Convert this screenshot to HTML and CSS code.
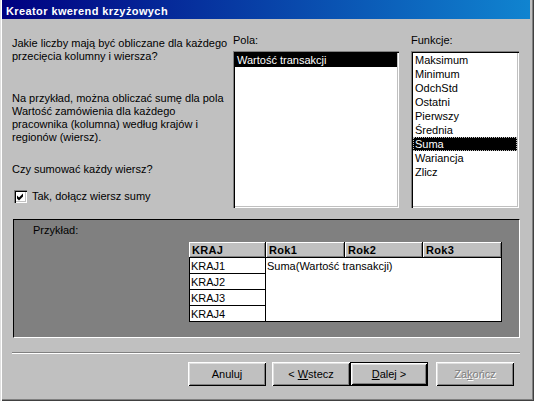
FILE: index.html
```html
<!DOCTYPE html>
<html lang="pl">
<head>
<meta charset="utf-8">
<title>Kreator kwerend krzyżowych</title>
<link rel="stylesheet" href="styles.css">
</head>
<body>
<div class="window">
  <div class="titlebar">Kreator kwerend krzyżowych</div>
  <div class="body">
    <div class="top">
      <div class="intro">
        <p class="q">Jakie liczby mają być obliczane dla każdego<br>przecięcia kolumny i wiersza?</p>
        <p class="example">Na przykład, można obliczać sumę dla pola<br>Wartość zamówienia dla każdego<br>pracownika (kolumna) według krajów i<br>regionów (wiersz).</p>
        <p class="q2">Czy sumować każdy wiersz?</p>
        <div class="check">
          <span class="box"><svg width="9" height="9" viewBox="0 0 9 9"><path d="M1 3.5 L3 5.5 L7 1.5 L7 4.5 L3 8.5 L1 6.5 Z" fill="#000"/></svg></span>
          <span>Tak, dołącz wiersz sumy</span>
        </div>
      </div>
      <div class="field fields">
        <div class="flabel">Pola:</div>
        <ul class="listbox">
          <li class="sel">Wartość transakcji</li>
        </ul>
      </div>
      <div class="field funcs">
        <div class="flabel">Funkcje:</div>
        <ul class="listbox">
          <li>Maksimum</li>
          <li>Minimum</li>
          <li>OdchStd</li>
          <li>Ostatni</li>
          <li>Pierwszy</li>
          <li>Średnia</li>
          <li class="sel focus">Suma</li>
          <li>Wariancja</li>
          <li>Zlicz</li>
        </ul>
      </div>
    </div>
    <div class="preview">
      <div class="plabel">Przykład:</div>
      <div class="grid">
        <div class="hcell">KRAJ</div>
        <div class="hcell">Rok1</div>
        <div class="hcell">Rok2</div>
        <div class="hcell">Rok3</div>
        <div class="rcell r1">KRAJ1</div>
        <div class="rcell r2">KRAJ2</div>
        <div class="rcell r3">KRAJ3</div>
        <div class="rcell r4">KRAJ4</div>
        <div class="vcell">Suma(Wartość transakcji)</div>
      </div>
    </div>
    <div class="sep"></div>
    <div class="buttons">
      <button class="btn cancel">Anuluj</button>
      <button class="btn back">&lt; <span class="acc">W</span>stecz</button>
      <button class="btn next default"><span class="acc">D</span>alej &gt;</button>
      <button class="btn finish disabled">Za<span class="acc">k</span>ończ</button>
    </div>
  </div>
</div>
</body>
</html>
```
FILE: styles.css
```css
* {
  box-sizing: border-box;
  margin: 0;
  padding: 0;
}

html, body {
  background: #c0c0c0;
}

body {
  font: 11px/13px "Liberation Sans", Arial, sans-serif;
  color: #000;
}

.window {
  width: 534px;
  height: 401px;
  overflow: hidden;
  background: #c0c0c0;
  padding: 0 4px 0 2px;
  box-shadow: inset 1px 0 0 #dfdfdf, inset 2px 0 0 #fff,
              inset -1px -1px 0 #404040, inset -2px -2px 0 #808080;
}

.titlebar {
  height: 19px;
  padding: 3px 0 0 4px;
  line-height: 16px;
  color: #fff;
  font-weight: bold;
  letter-spacing: 0.4px;
  background: linear-gradient(to right, #000080, #1084d0);
}

.body {
  padding: 15px 0 0 10px;
}

.top {
  display: flex;
  height: 174px;
}

.intro {
  width: 221px;
  padding-top: 3px;
}

.example {
  margin-top: 29px;
}

.q2 {
  margin-top: 19px;
}

.check {
  display: flex;
  margin-top: 14px;
}

.box {
  width: 13px;
  height: 13px;
  margin: 0 5px 0 2px;
  padding: 2px;
  background: #fff;
  box-shadow: inset 1px 1px 0 #808080, inset 2px 2px 0 #000,
              inset -1px -1px 0 #fff, inset -2px -2px 0 #c0c0c0;
}

.box svg {
  display: block;
}

.fields {
  width: 166px;
}

.funcs {
  width: 108px;
  margin-left: 12px;
}

.flabel {
  height: 13px;
}

.listbox {
  list-style: none;
  margin-top: 4px;
  height: 157px;
  padding: 2px;
  background: #fff;
  box-shadow: inset 1px 1px 0 #808080, inset 2px 2px 0 #000,
              inset -1px -1px 0 #fff, inset -2px -2px 0 #c0c0c0;
}

.listbox li {
  height: 14px;
  line-height: 14px;
  padding-left: 2px;
  white-space: nowrap;
}

.listbox li.sel {
  background: #000;
  color: #fff;
}

.listbox li.focus {
  outline: 1px dotted #bfbfbf;
  outline-offset: -1px;
}

.preview {
  margin: 11px 0 0 1px;
  width: 507px;
  height: 119px;
  background: #808080;
  border-top: 1px solid #000;
  border-left: 1px solid #000;
  border-right: 1px solid #fff;
  border-bottom: 1px solid #fff;
  padding: 4px 0 0 19px;
}

.plabel {
  height: 13px;
}

.grid {
  display: grid;
  grid-template-columns: 77px 79px 78px 79px;
  grid-template-rows: repeat(5, 16px);
  margin: 5px 0 0 156px;
  width: 313px;
}

.hcell {
  background: #c0c0c0;
  font-weight: bold;
  letter-spacing: 0.3px;
  padding: 2px 0 0 3px;
  border-right: 1px solid #000;
  border-bottom: 1px solid #000;
  box-shadow: inset 1px 1px 0 #fff, inset -1px -1px 0 #808080;
}

.rcell {
  grid-column: 1;
  background: #fff;
  padding: 2px 0 0 1px;
  border-left: 1px solid #000;
  border-right: 1px solid #000;
  border-bottom: 1px solid #000;
}

.r1 { grid-row: 2; }
.r2 { grid-row: 3; }
.r3 { grid-row: 4; }
.r4 { grid-row: 5; }

.vcell {
  grid-column: 2 / 5;
  grid-row: 2 / 6;
  background: #fff;
  padding: 2px 0 0 1px;
  border-right: 1px solid #000;
  border-bottom: 1px solid #000;
}

.sep {
  margin-top: 14px;
  width: 508px;
  height: 2px;
  border-top: 1px solid #808080;
  border-bottom: 1px solid #fff;
}

.buttons {
  display: flex;
  margin: 8px 0 0 176px;
}

.btn {
  appearance: none;
  width: 78px;
  height: 24px;
  font: inherit;
  line-height: 22px;
  color: #000;
  text-align: center;
  background: #c0c0c0;
  border: 0;
  box-shadow: inset 1px 1px 0 #fff, inset -1px -1px 0 #000,
              inset 2px 2px 0 #dfdfdf, inset -2px -2px 0 #808080;
}

.cancel {
  margin-right: 6px;
}

.next {
  margin-right: 8px;
}

.default {
  border: 1px solid #000;
}

.acc {
  text-decoration: underline;
}

.disabled {
  color: #808080;
  text-shadow: 1px 1px 0 #fff;
}
```
